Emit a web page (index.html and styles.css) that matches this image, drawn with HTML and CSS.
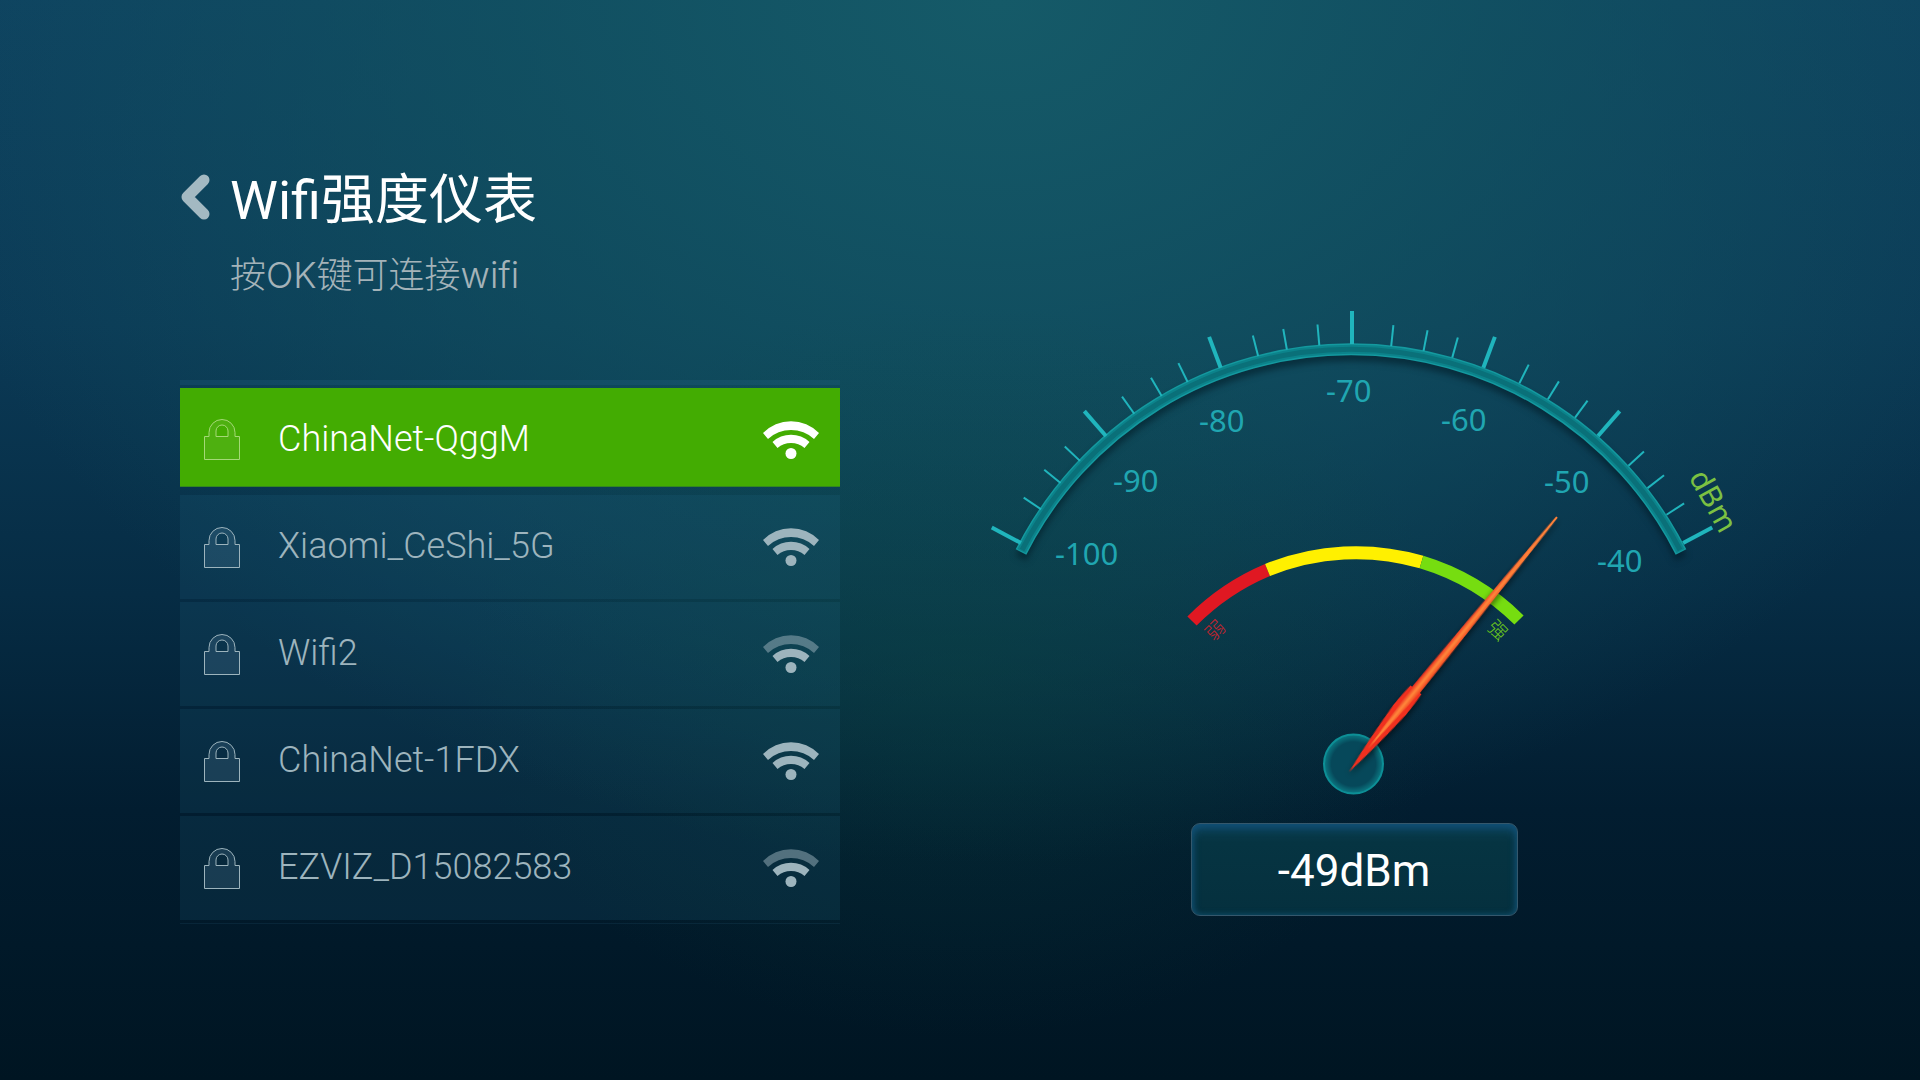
FILE: index.html
```html
<!DOCTYPE html>
<html lang="zh-CN">
<head>
    <meta charset="UTF-8">
    <meta name="viewport" content="width=device-width, initial-scale=1.0">
    <title>Wifi强度仪表</title>
    <link rel="stylesheet" href="styles.css">
</head>
<body>
    <!-- Shared icons -->
    <svg class="sprite" aria-hidden="true">
        <symbol id="icon-lock" viewBox="0 0 36 41">
            <path d="M.5 17.500h4.500v-4a13 13 0 0 1 26 0v4h4.500v23h-35zM12 17.500v-5.500a6 6 0 0 1 12 0v5.500z" fill-rule="evenodd"/>
        </symbol>
        <symbol id="icon-wifi" viewBox="0 0 56 38">
            <path class="wave-outer" d="M0 12A39 39 0 0 1 56 12L51 18A34 34 0 0 0 5 18Z"/>
            <path d="M9.500 21A27 27 0 0 1 46.500 21L41.500 27A20.500 20.500 0 0 0 14.500 27Z"/>
            <circle cx="28" cy="32.500" r="5.500"/>
        </symbol>
    </svg>

    <main class="page">
        <section class="networks">
            <header class="header">
                <button class="back-btn" type="button" aria-label="返回">
                    <svg viewBox="0 0 30 46"><path d="M24 6L7 23L24 40"/></svg>
                </button>
                <div>
                    <h1>Wifi强度仪表</h1>
                    <p>按OK键可连接wifi</p>
                </div>
            </header>

            <div class="wifi-list">
                <button class="wifi-item active" type="button">
                    <svg class="lock"><use href="#icon-lock"/></svg>
                    <span>ChinaNet-QggM</span>
                    <svg class="signal"><use href="#icon-wifi"/></svg>
                </button>
                <button class="wifi-item" type="button">
                    <svg class="lock"><use href="#icon-lock"/></svg>
                    <span>Xiaomi_CeShi_5G</span>
                    <svg class="signal"><use href="#icon-wifi"/></svg>
                </button>
                <button class="wifi-item" type="button">
                    <svg class="lock"><use href="#icon-lock"/></svg>
                    <span>Wifi2</span>
                    <svg class="signal weak"><use href="#icon-wifi"/></svg>
                </button>
                <button class="wifi-item" type="button">
                    <svg class="lock"><use href="#icon-lock"/></svg>
                    <span>ChinaNet-1FDX</span>
                    <svg class="signal"><use href="#icon-wifi"/></svg>
                </button>
                <button class="wifi-item" type="button">
                    <svg class="lock"><use href="#icon-lock"/></svg>
                    <span>EZVIZ_D15082583</span>
                    <svg class="signal weak"><use href="#icon-wifi"/></svg>
                </button>
            </div>
        </section>

        <section class="meter">
            <svg class="gauge" viewBox="0 0 760 500">
                <defs>
                    <linearGradient id="needle-fill" x1="0" x2="1" y1="0" y2="0">
                        <stop offset="0" stop-color="#e8261c"/>
                        <stop offset=".5" stop-color="#ff8a3c"/>
                        <stop offset="1" stop-color="#f0401e"/>
                    </linearGradient>
                    <radialGradient id="hub-fill">
                        <stop offset=".75" stop-color="#06485a"/>
                        <stop offset="1" stop-color="#0b7a84"/>
                    </radialGradient>
                </defs>

                <!-- Scale -->
                <g class="scale-arc">
                    <path class="arc-edge" d="M47 252A370 370 0 0 1 707 252"/>
                    <path class="arc-glow" d="M47.500 251A370 370 0 0 1 706.500 251"/>
                    <path class="arc-core" d="M48 250A370 370 0 0 1 706 250"/>
                </g>
                <g id="ticks" transform="translate(378 419)"></g>
                <g class="labels">
                    <text x="81" y="265">-100</text>
                    <text x="139" y="192">-90</text>
                    <text x="225" y="132">-80</text>
                    <text x="352" y="102">-70</text>
                    <text x="467" y="131">-60</text>
                    <text x="570" y="193">-50</text>
                    <text x="623" y="272">-40</text>
                </g>
                <text class="unit" transform="translate(739 201) rotate(61)" y="10">dBm</text>

                <!-- Weak to strong band -->
                <g class="band">
                    <path class="weak-band" d="M218 321A234 234 0 0 1 293.500 270"/>
                    <path class="mid-band" d="M293.500 270A234 234 0 0 1 447.500 262"/>
                    <path class="strong-band" d="M447.500 262A234 234 0 0 1 545 320"/>
                </g>
                <text class="mark weak-mark" transform="translate(241 330) rotate(-45)" y="7">弱</text>
                <text class="mark strong-mark" transform="translate(524 330) rotate(45)" y="7">强</text>

                <!-- Needle -->
                <circle class="hub" cx="379.500" cy="464" r="29.500"/>
                <g class="needle" transform="translate(375 472) rotate(39.200)">
                    <path class="needle-base" d="M0 0Q-5 -35 -8 -80Q-8 -95 -7 -106H7Q8 -95 8 -80Q5 -35 0 0Z"/>
                    <path fill="url(#needle-fill)" d="M0 -30L-5 -105Q-4 -200 -1 -329H1Q4 -200 5 -105Z"/>
                </g>
            </svg>
            <output class="readout">-49dBm</output>
        </section>
    </main>

    <script>
        // tick angles in degrees from the top of the scale
        const major = [-62, -41, -20.5, 0, 20.5, 41, 62];
        const minor = [-56, -51, -46.5, -35.5, -30.5, -26, -14.5, -10, -5, 6, 11, 15.5, 26.5, 31.5, 36.5, 47.5, 52, 57];
        const ticks = document.getElementById('ticks');

        function addTick(angle, length, name) {
            const line = document.createElementNS('http://www.w3.org/2000/svg', 'line');
            line.setAttribute('y1', -375);
            line.setAttribute('y2', -375 - length);
            line.setAttribute('class', name);
            line.setAttribute('transform', `rotate(${angle})`);
            ticks.appendChild(line);
        }

        major.forEach(angle => addTick(angle, 33, 'tick-major'));
        minor.forEach(angle => addTick(angle, 21, 'tick-minor'));
    </script>
</body>
</html>
```
FILE: styles.css
```css
* {
    box-sizing: border-box;
}

body {
    margin: 0;
    min-height: 100vh;
    font-family: Inter, "Noto Sans CJK SC", sans-serif;
    color: #fff;
    background:
        radial-gradient(ellipse 26% 34% at 50% 62%, rgba(10, 70, 60, 0.35), transparent),
        radial-gradient(ellipse 58% 80% at 52% 0%, #155a68 0%, rgba(18, 84, 98, 0.7) 45%, transparent 100%),
        linear-gradient(180deg, #0e4260 0%, #0b3a56 30%, #062c44 55%, #021d30 75%, #001522 100%);
}

button {
    font: inherit;
    color: inherit;
    border: none;
    cursor: pointer;
}

.sprite {
    position: absolute;
    width: 0;
    height: 0;
}

.page {
    display: grid;
    grid-template-columns: 660fr 760fr;
    gap: 134px;
    padding: 164px 186px 0 180px;
}

/* Title */
.header {
    display: flex;
    gap: 19px;
    height: 216px;
}

.back-btn {
    width: 31px;
    height: 66px;
    padding: 0;
    background: none;
}

.back-btn svg {
    display: block;
    width: 30px;
    height: 46px;
    fill: none;
    stroke: #a3b9c2;
    stroke-width: 11;
    stroke-linecap: round;
    stroke-linejoin: round;
}

h1 {
    margin: 0;
    font: 400 54px/74px Roboto, "Noto Sans CJK SC", sans-serif;
}

p {
    margin: 12px 0 0;
    font-size: 36px;
    font-weight: 300;
    line-height: 50px;
    color: #a4b3b9;
}

/* Network list */
.wifi-list {
    display: flex;
    flex-direction: column;
    gap: 3px;
}

.wifi-list::before {
    content: "";
    height: 5px;
    background: rgba(40, 110, 150, 0.2);
}

.wifi-list::after {
    content: "";
    height: 1px;
    background: rgba(40, 90, 120, 0.2);
}

.wifi-item {
    display: flex;
    align-items: center;
    height: 104px;
    padding: 0 21px 0 24px;
    background: rgba(40, 110, 140, 0.16);
    color: #9db4bd;
    font-family: Roboto, sans-serif;
    font-size: 36px;
    font-weight: 300;
    text-align: left;
}

.wifi-item span {
    flex: 1;
    padding-bottom: 2px;
}

.wifi-item.active {
    height: 99px;
    padding-top: 5px;
    margin-bottom: 5px;
    background: #43ac02;
    border-bottom: 1px solid #33891e;
    color: #fff;
}

.lock {
    width: 36px;
    height: 41px;
    margin-right: 38px;
    fill: rgba(100, 140, 170, 0.2);
    stroke: currentColor;
}

.active .lock {
    color: #a5d977;
    fill: rgba(255, 255, 255, 0.06);
}

.signal {
    width: 56px;
    height: 38px;
    fill: currentColor;
    --outer: 1;
}

.signal.weak {
    --outer: 0.5;
}

.wave-outer {
    opacity: var(--outer);
}

/* Gauge */
.meter {
    display: flex;
    flex-direction: column;
    align-items: center;
    padding-top: 136px;
}

.gauge {
    display: block;
    width: 100%;
    overflow: visible;
}

.scale-arc {
    fill: none;
    filter: drop-shadow(0 6px 3px rgba(0, 20, 30, 0.5));
}

.arc-edge {
    stroke: #14999f;
    stroke-width: 12;
}

.arc-glow {
    stroke: #0c838b;
    stroke-width: 9;
}

.arc-core {
    stroke: #0a7079;
    stroke-width: 5;
}

.tick-major {
    stroke: #20b5bd;
    stroke-width: 4;
}

.tick-minor {
    stroke: #20b5bd;
    stroke-width: 2;
}

.labels {
    fill: #20a6b1;
    font: 400 31px "Noto Sans", sans-serif;
}

.unit {
    fill: #7cc142;
    font: 400 30px "Noto Sans", sans-serif;
    text-anchor: middle;
}

.band {
    fill: none;
    stroke-width: 13;
}

.weak-band {
    stroke: #e01822;
}

.mid-band {
    stroke: #fff000;
}

.strong-band {
    stroke: #76dd10;
}

.mark {
    font: 300 19px "Noto Sans CJK SC", sans-serif;
    text-anchor: middle;
}

.weak-mark {
    fill: #c5232d;
}

.strong-mark {
    fill: #6cc81c;
}

.hub {
    fill: url(#hub-fill);
    stroke: #0d8f96;
    stroke-width: 2;
}

.needle {
    filter: drop-shadow(2px 3px 3px rgba(0, 0, 0, 0.6));
}

.needle-base {
    fill: #f0301f;
}

.readout {
    width: 327px;
    height: 93px;
    margin-top: 23px;
    border: 1px solid #35586c;
    border-radius: 9px;
    background: linear-gradient(#0a3e52, #063442 20%, #05303e);
    box-shadow: inset 0 4px 8px #125078, inset 0 0 6px #0f4e68;
    font: 400 44px/95px Roboto, sans-serif;
    text-align: center;
}
```
